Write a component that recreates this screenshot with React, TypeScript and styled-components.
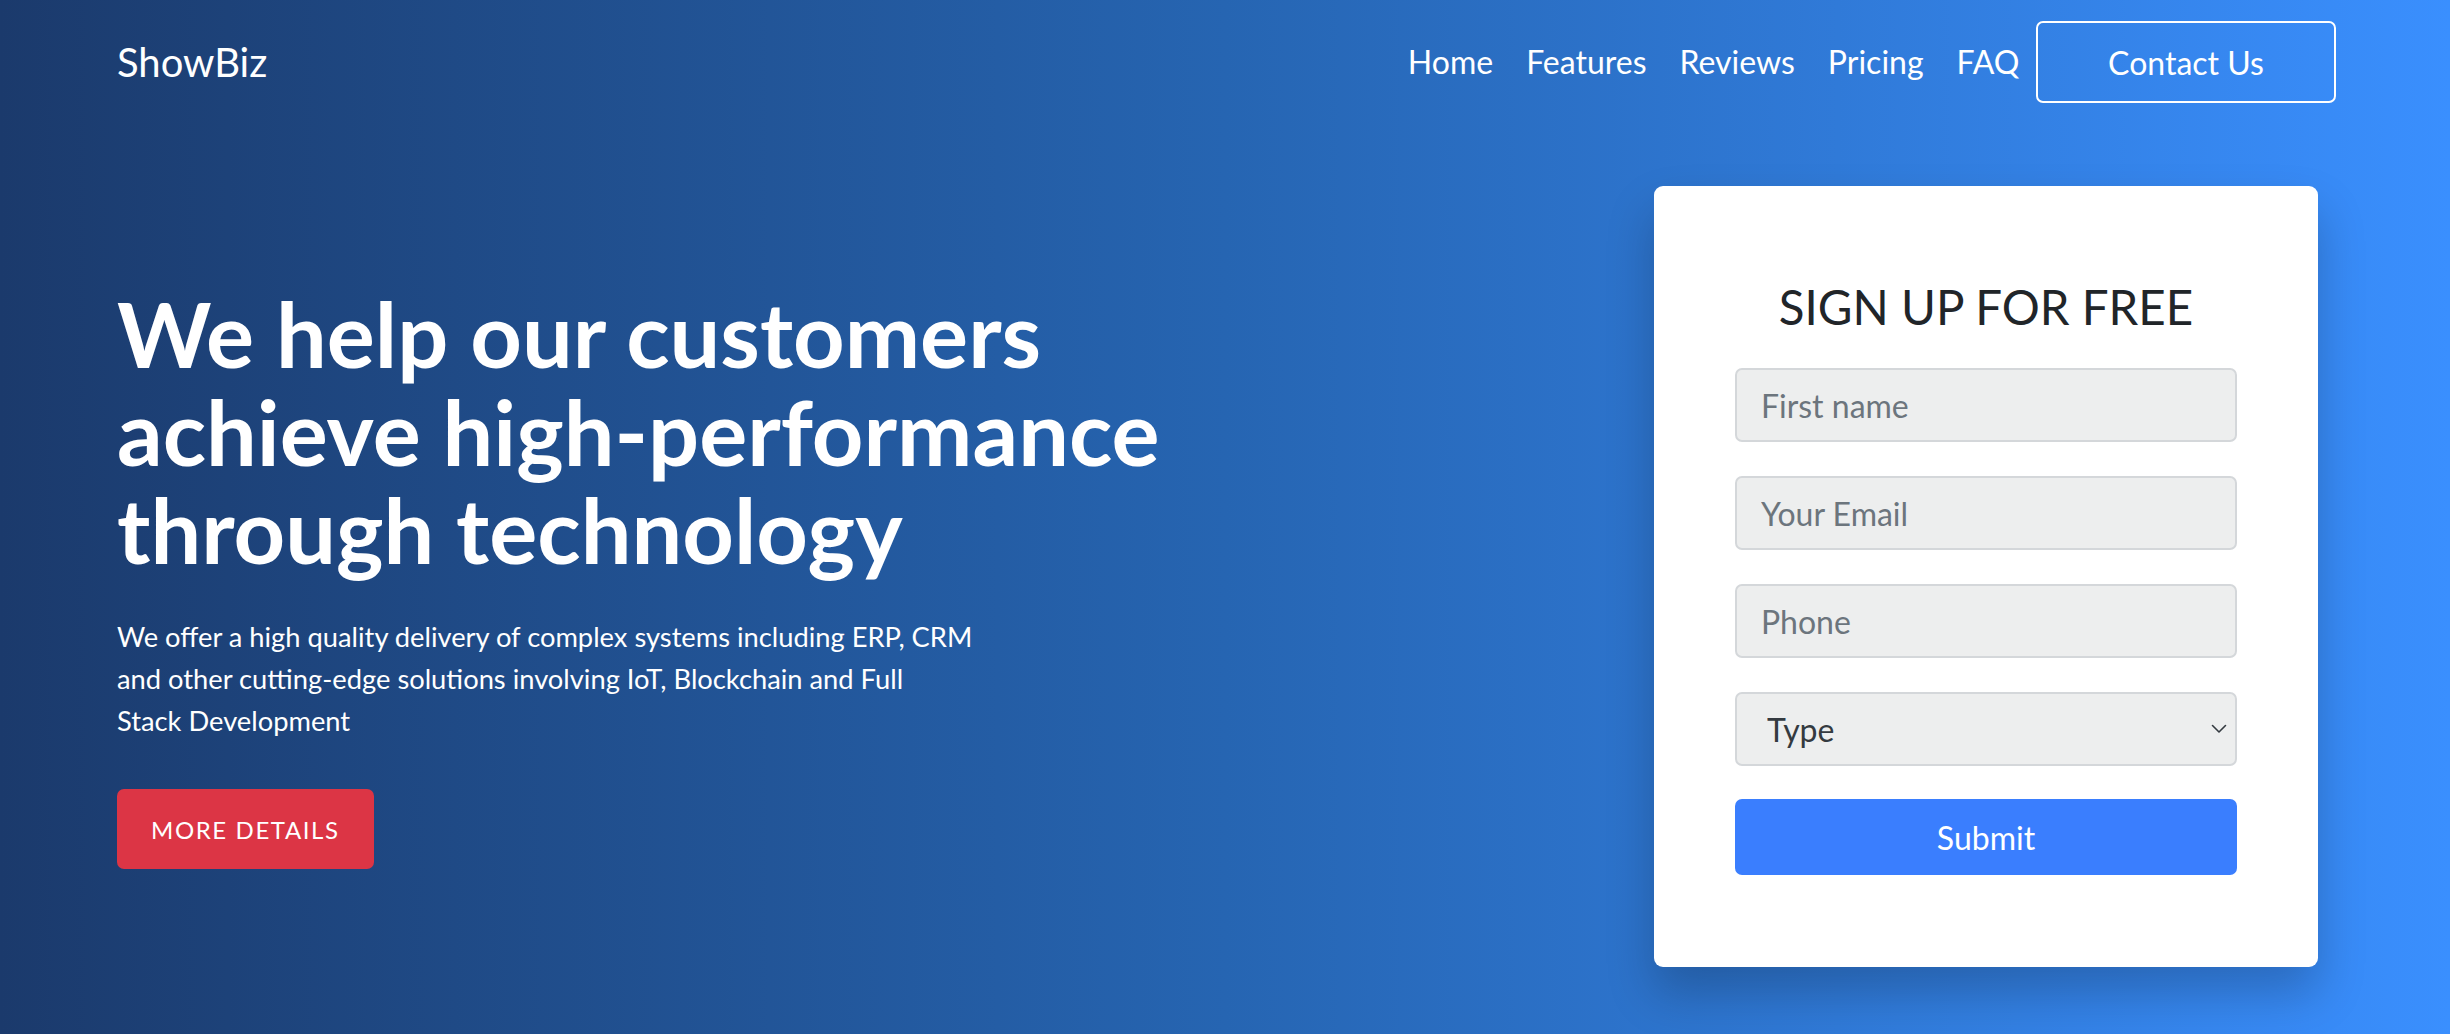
import React from "react";
import styled, { createGlobalStyle } from "styled-components";

const GlobalStyle = createGlobalStyle`
  html, body { margin: 0; padding: 0; }
  body {
    font-family: Lato, "Open Sans", "Liberation Sans", sans-serif;
    -webkit-font-smoothing: antialiased;
  }
  * { box-sizing: border-box; }
`;

const Hero = styled.section`
  min-height: 100vh;
  background: linear-gradient(to right, #1b3a6c 0%, #2665b2 50%, #3a8ffe 100%);
  color: #fff;
  padding: 21px 114px 0 117px;
  display: flex;
  flex-direction: column;
`;

const NavBar = styled.nav`
  display: flex;
  align-items: center;
  justify-content: space-between;
  height: 82px;
`;

const Brand = styled.a`
  font-size: 40px;
  font-weight: 400;
  color: #fff;
  text-decoration: none;
  line-height: 1;
`;

const NavList = styled.div`
  display: flex;
  align-items: center;
  height: 100%;
`;

const NavLink = styled.a`
  font-size: 32px;
  color: #fff;
  text-decoration: none;
  padding: 0 16.5px;
  line-height: 1;
`;

const ContactButton = styled.a`
  display: flex;
  align-items: center;
  justify-content: center;
  width: 300px;
  height: 82px;
  border: 2px solid #fff;
  border-radius: 7px;
  font-size: 32px;
  color: #fff;
  text-decoration: none;
`;

const Main = styled.div`
  display: flex;
  align-items: center;
  justify-content: space-between;
  margin-top: 83px;
  padding-right: 18px;
`;

const Intro = styled.div`
  display: flex;
  flex-direction: column;
  align-items: flex-start;
`;

const Headline = styled.h1`
  margin: 0;
  font-size: 90px;
  font-weight: 700;
  line-height: 98px;
`;

const Lead = styled.p`
  margin: 38px 0 0;
  max-width: 880px;
  font-size: 27.3px;
  line-height: 42px;
`;

const DetailsButton = styled.a`
  display: flex;
  align-items: center;
  justify-content: center;
  margin-top: 47px;
  height: 80px;
  padding: 0 34px;
  background: #dc3545;
  border-radius: 7px;
  color: #fff;
  font-size: 24px;
  letter-spacing: 1.6px;
  text-transform: uppercase;
  text-decoration: none;
`;

const Card = styled.div`
  width: 664px;
  background: #fff;
  border-radius: 9px;
  padding: 93px 81px 92px;
  box-shadow: 0 26px 48px rgba(0, 0, 0, 0.22);
  color: #212529;
`;

const CardTitle = styled.h2`
  margin: 0 0 34px;
  text-align: center;
  font-size: 47.5px;
  font-weight: 400;
  line-height: 55px;
`;

const Form = styled.form`
  display: flex;
  flex-direction: column;
  gap: 34px;
`;

const fieldBase = `
  width: 100%;
  height: 74px;
  border: 2px solid #d4d7da;
  border-radius: 7px;
  background: #edeeee;
  font-family: Lato, "Open Sans", "Liberation Sans", sans-serif;
  font-size: 32px;
  color: #212529;
  outline: none;
`;

const Input = styled.input`
  ${fieldBase}
  padding: 0 24px;
  &::placeholder { color: #6c757d; opacity: 1; }
`;

const SelectWrap = styled.div`
  position: relative;
`;

const Select = styled.select`
  ${fieldBase}
  appearance: none;
  -webkit-appearance: none;
  padding: 0 30px;
  color: #343a40;
`;

const Chevron = styled.svg`
  position: absolute;
  right: 10px;
  top: 50%;
  width: 16px;
  height: 10px;
  transform: translateY(-50%);
  pointer-events: none;
`;

const Submit = styled.button`
  height: 76px;
  margin-top: -1px;
  border: none;
  border-radius: 7px;
  background: #3a7efe;
  color: #fff;
  font-family: Lato, "Open Sans", "Liberation Sans", sans-serif;
  font-size: 32px;
  cursor: pointer;
`;

export default function App() {
  return (
    <>
      <GlobalStyle />
      <Hero>
        <NavBar>
          <Brand href="#">ShowBiz</Brand>
          <NavList>
            <NavLink href="#">Home</NavLink>
            <NavLink href="#">Features</NavLink>
            <NavLink href="#">Reviews</NavLink>
            <NavLink href="#">Pricing</NavLink>
            <NavLink href="#">FAQ</NavLink>
            <ContactButton href="#">Contact Us</ContactButton>
          </NavList>
        </NavBar>
        <Main>
          <Intro>
            <Headline>
              We help our customers
              <br />
              achieve high-performance
              <br />
              through technology
            </Headline>
            <Lead>
              We offer a high quality delivery of complex systems including ERP, CRM and other
              cutting-edge solutions involving IoT, Blockchain and Full Stack{"\u00a0"}Development
            </Lead>
            <DetailsButton href="#">More Details</DetailsButton>
          </Intro>
          <Card>
            <CardTitle>SIGN UP FOR FREE</CardTitle>
            <Form onSubmit={(e) => e.preventDefault()}>
              <Input type="text" placeholder="First name" />
              <Input type="email" placeholder="Your Email" />
              <Input type="tel" placeholder="Phone" />
              <SelectWrap>
                <Select defaultValue="">
                  <option value="">Type</option>
                  <option value="a">Business</option>
                  <option value="b">Personal</option>
                </Select>
                <Chevron viewBox="0 0 16 10" fill="none">
                  <path d="M1.5 1.5 L8 8 L14.5 1.5" stroke="#343a40" strokeWidth="1.6" strokeLinecap="round" strokeLinejoin="round" />
                </Chevron>
              </SelectWrap>
              <Submit type="submit">Submit</Submit>
            </Form>
          </Card>
        </Main>
      </Hero>
    </>
  );
}
